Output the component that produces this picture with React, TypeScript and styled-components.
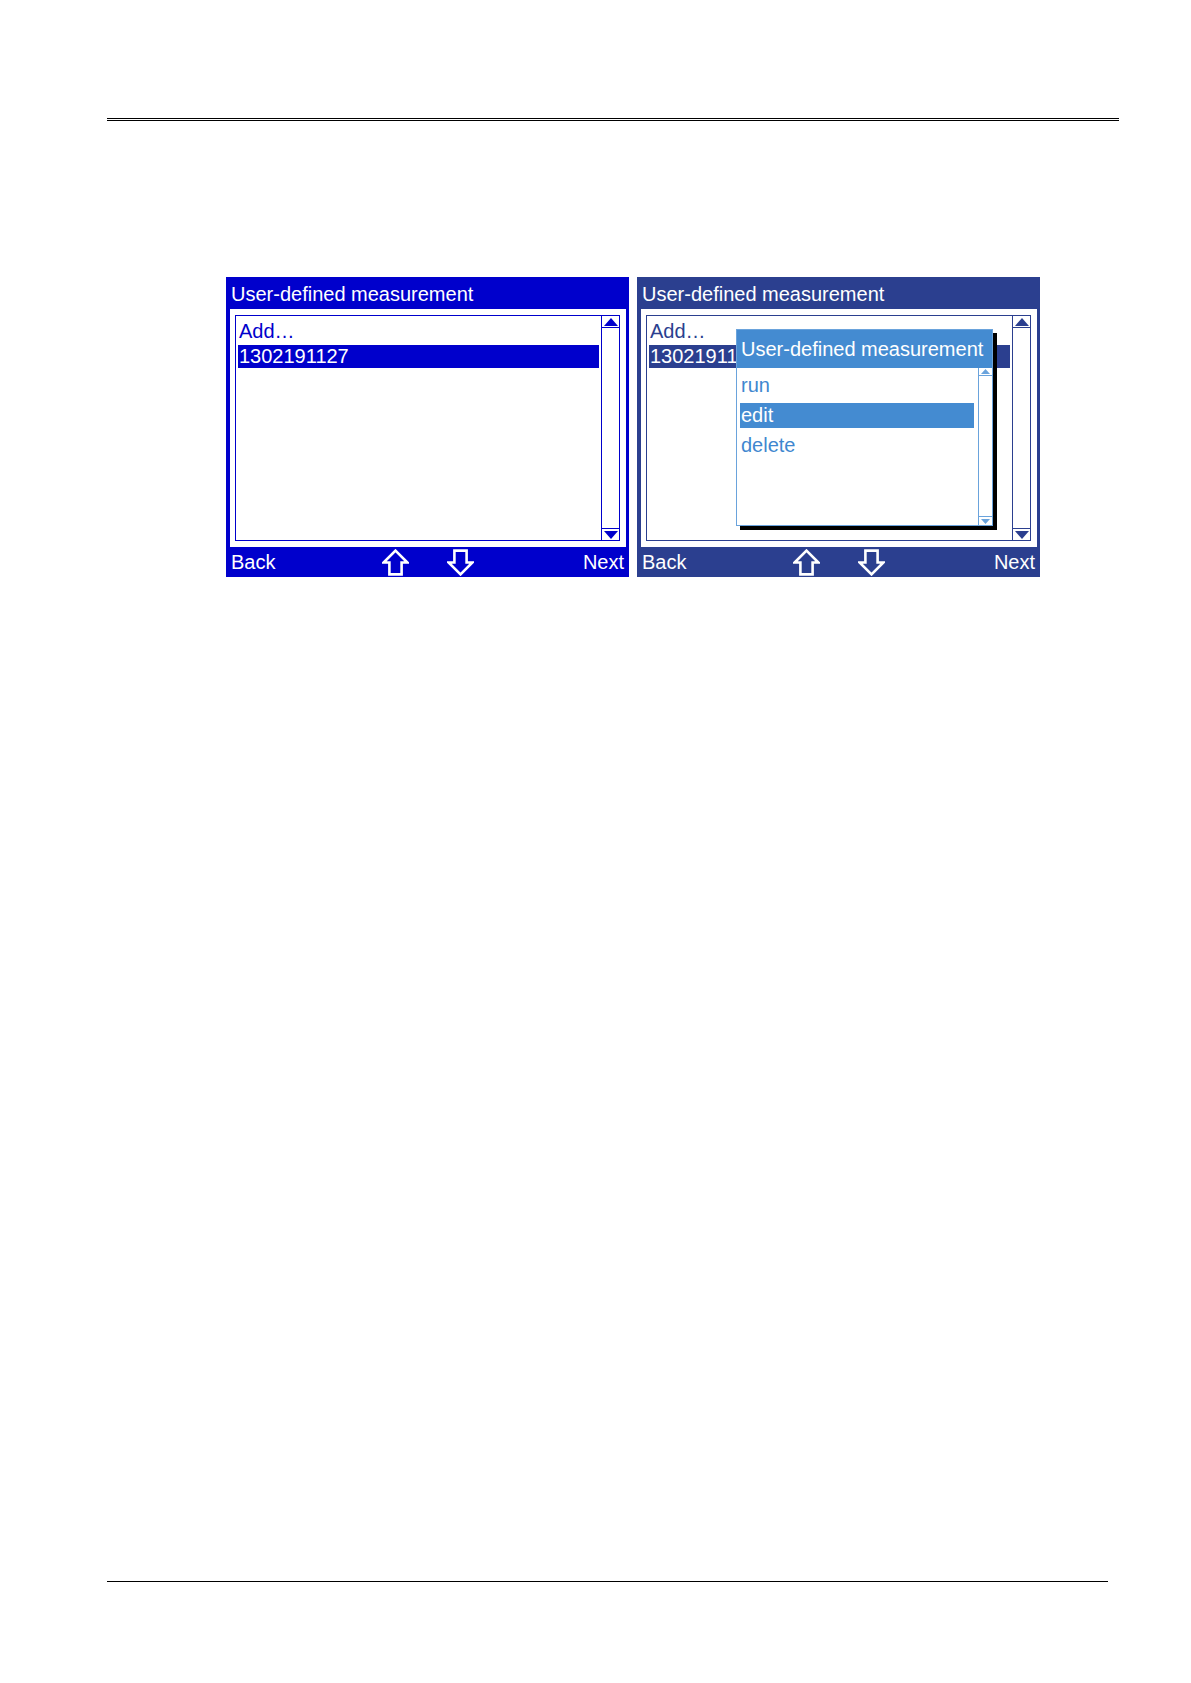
import React from "react";
import styled, { createGlobalStyle } from "styled-components";

const GlobalStyle = createGlobalStyle`
  html, body {
    margin: 0;
    padding: 0;
    background: #ffffff;
    font-family: "Liberation Sans", Arial, sans-serif;
  }
  * { box-sizing: border-box; }
`;

const Page = styled.div`
  width: 1191px;
  min-height: 1683px;
  padding-top: 118px;
  display: flex;
  flex-direction: column;
  overflow: hidden;
`;

const HeaderRule = styled.div`
  margin-left: 107px;
  width: 1012px;
  height: 3px;
  border-top: 1px solid #000;
  border-bottom: 1px solid #000;
`;

const FooterRule = styled.div`
  margin-top: 1004px;
  margin-left: 107px;
  width: 1001px;
  height: 1px;
  background: #000;
`;

const Screens = styled.div`
  margin-top: 156px;
  margin-left: 226px;
  display: flex;
  gap: 8px;
`;

const Panel = styled.div<{ $bg: string }>`
  position: relative;
  width: 403px;
  height: 300px;
  background: ${(p) => p.$bg};
  display: flex;
  flex-direction: column;
`;

const TitleBar = styled.div`
  height: 32px;
  padding: 2px 0 0 5px;
  line-height: 30px;
  font-size: 20px;
  color: #ffffff;
  white-space: nowrap;
`;

const Frame = styled.div`
  margin: 0 3px 0 4px;
  height: 238px;
  background: #ffffff;
  padding: 6px 6px 6px 5px;
  display: flex;
`;

const Inner = styled.div<{ $line: string }>`
  flex: 1;
  display: flex;
  border: 1px solid ${(p) => p.$line};
`;

const List = styled.div`
  flex: 1;
  padding: 4px 2px 0 2px;
  display: flex;
  flex-direction: column;
  gap: 2px;
  overflow: hidden;
`;

const Row = styled.div<{ $color: string; $selected?: boolean }>`
  height: 23px;
  line-height: 23px;
  font-size: 20px;
  padding-left: 1px;
  white-space: nowrap;
  color: ${(p) => (p.$selected ? "#ffffff" : p.$color)};
  background: ${(p) => (p.$selected ? p.$color : "transparent")};
`;

const ScrollBar = styled.div<{ $line: string; $w: number }>`
  width: ${(p) => p.$w}px;
  flex: none;
  border-left: 1px solid ${(p) => p.$line};
  display: flex;
  flex-direction: column;
  justify-content: space-between;
`;

const ScrollBtn = styled.div<{ $line: string; $h: number; $edge: "top" | "bottom" }>`
  height: ${(p) => p.$h}px;
  display: flex;
  align-items: center;
  justify-content: center;
  ${(p) =>
    p.$edge === "bottom"
      ? `border-bottom: 1px solid ${p.$line};`
      : `border-top: 1px solid ${p.$line};`}
`;

const Footer = styled.div`
  flex: 1;
  display: grid;
  grid-template-columns: 1fr auto 1fr;
  align-items: center;
  padding: 0 5px;
  color: #ffffff;
  font-size: 20px;
  line-height: 30px;
`;

const FooterLeft = styled.span`
  justify-self: start;
`;

const FooterRight = styled.span`
  justify-self: end;
`;

const Arrows = styled.div`
  display: flex;
  gap: 38px;
  align-items: center;
`;

const Popup = styled.div`
  position: absolute;
  left: 99px;
  top: 52px;
  width: 257px;
  height: 197px;
  border: 1px solid #6aa3dc;
  background: #ffffff;
  box-shadow: 4px 4px 0 #000000;
  display: flex;
  flex-direction: column;
`;

const PopupTitle = styled.div`
  height: 38px;
  padding: 1px 0 0 4px;
  line-height: 37px;
  font-size: 20px;
  color: #ffffff;
  background: #448bd1;
  white-space: nowrap;
`;

const PopupBody = styled.div`
  flex: 1;
  display: flex;
`;

const PopupList = styled.div`
  flex: 1;
  padding: 5px 4px 0 3px;
  display: flex;
  flex-direction: column;
  gap: 5px;
`;

const PopupRow = styled.div<{ $selected?: boolean }>`
  height: 25px;
  line-height: 25px;
  font-size: 20px;
  padding-left: 1px;
  color: ${(p) => (p.$selected ? "#ffffff" : "#3f87cf")};
  background: ${(p) => (p.$selected ? "#448bd1" : "transparent")};
`;

const Tri = ({ dir, color, w, h }: { dir: "up" | "down"; color: string; w: number; h: number }) => (
  <svg width={w} height={h} viewBox={`0 0 ${w} ${h}`}>
    <polygon
      points={dir === "up" ? `${w / 2},0 ${w},${h} 0,${h}` : `0,0 ${w},0 ${w / 2},${h}`}
      fill={color}
    />
  </svg>
);

const BlockArrow = ({ dir }: { dir: "up" | "down" }) => (
  <svg width={27} height={27} viewBox="0 0 27 27">
    <path
      d="M13.5 1.6 L25.4 13.5 L19.6 13.5 L19.6 25.4 L7.4 25.4 L7.4 13.5 L1.6 13.5 Z"
      fill="none"
      stroke="#ffffff"
      strokeWidth={2.6}
      strokeLinejoin="miter"
      transform={dir === "down" ? "rotate(180 13.5 13.5)" : undefined}
    />
  </svg>
);

type ScreenProps = {
  bg: string;
  children?: React.ReactNode;
};

const Screen = ({ bg, children }: ScreenProps) => (
  <Panel $bg={bg}>
    <TitleBar>User-defined measurement</TitleBar>
    <Frame>
      <Inner $line={bg}>
        <List>
          <Row $color={bg}>Add…</Row>
          <Row $color={bg} $selected>
            1302191127
          </Row>
        </List>
        <ScrollBar $line={bg} $w={18}>
          <ScrollBtn $line={bg} $h={12} $edge="bottom">
            <Tri dir="up" color={bg} w={14} h={8} />
          </ScrollBtn>
          <ScrollBtn $line={bg} $h={12} $edge="top">
            <Tri dir="down" color={bg} w={14} h={8} />
          </ScrollBtn>
        </ScrollBar>
      </Inner>
    </Frame>
    <Footer>
      <FooterLeft>Back</FooterLeft>
      <Arrows>
        <BlockArrow dir="up" />
        <BlockArrow dir="down" />
      </Arrows>
      <FooterRight>Next</FooterRight>
    </Footer>
    {children}
  </Panel>
);

export default function App() {
  return (
    <>
      <GlobalStyle />
      <Page>
        <HeaderRule />
        <Screens>
          <Screen bg="#0000cc" />
          <Screen bg="#2b3f8f">
            <Popup>
              <PopupTitle>User-defined measurement</PopupTitle>
              <PopupBody>
                <PopupList>
                  <PopupRow>run</PopupRow>
                  <PopupRow $selected>edit</PopupRow>
                  <PopupRow>delete</PopupRow>
                </PopupList>
                <ScrollBar $line="#6aa3dc" $w={14}>
                  <ScrollBtn $line="#6aa3dc" $h={8} $edge="bottom">
                    <Tri dir="up" color="#6aa3dc" w={9} h={5} />
                  </ScrollBtn>
                  <ScrollBtn $line="#6aa3dc" $h={9} $edge="top">
                    <Tri dir="down" color="#6aa3dc" w={9} h={5} />
                  </ScrollBtn>
                </ScrollBar>
              </PopupBody>
            </Popup>
          </Screen>
        </Screens>
        <FooterRule />
      </Page>
    </>
  );
}
